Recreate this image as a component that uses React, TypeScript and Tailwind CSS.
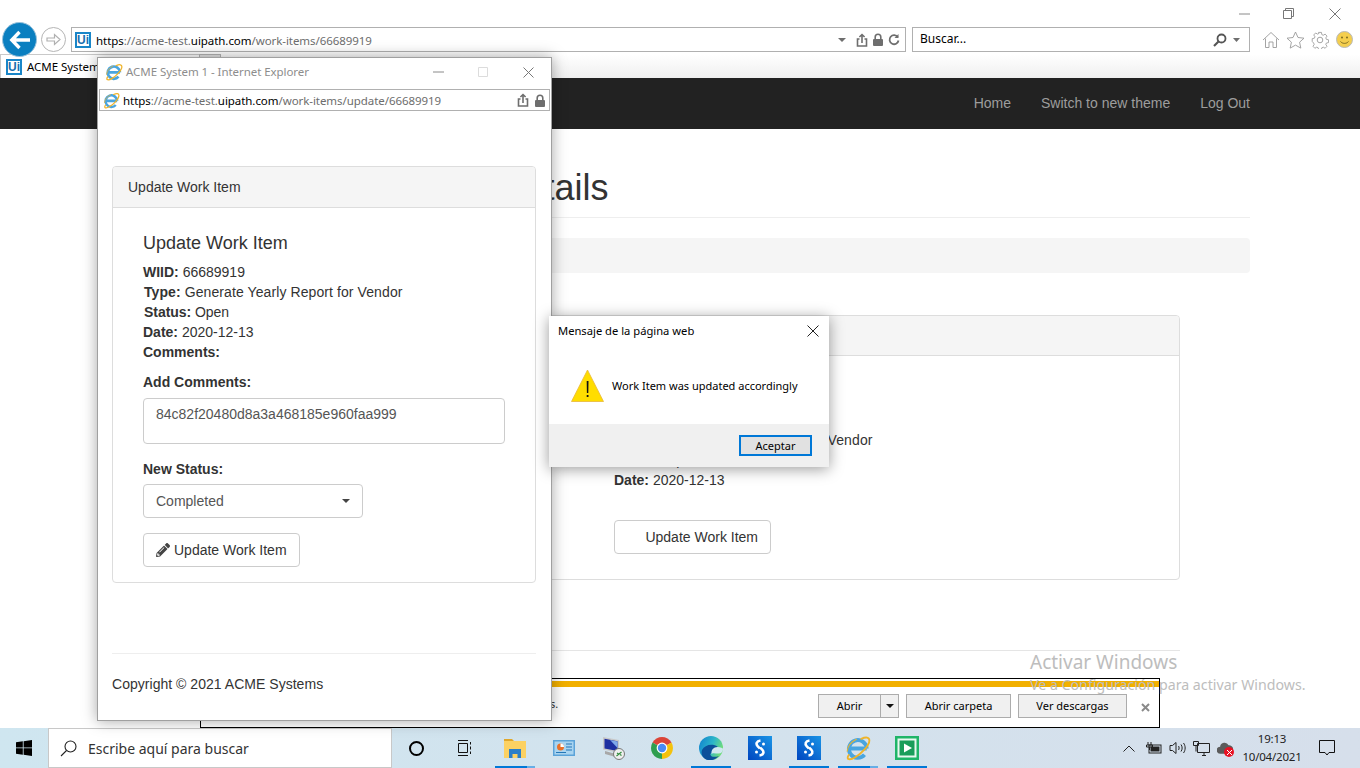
import React from "react";
import { FaPencilAlt } from "react-icons/fa";

const UI = "font-['Noto_Sans','Open_Sans',sans-serif]";
const WEB = "font-['Liberation_Sans',Arial,sans-serif]";

function UiLogo() {
  return (
    <span className={`${WEB} flex h-[16px] w-[16px] items-center justify-center border-2 border-[#1a86c8] bg-white text-[12px] font-bold leading-none text-[#1a6fb0]`}>
      Ui
    </span>
  );
}

function IeIcon({ size = 18 }: { size?: number }) {
  return (
    <svg width={size} height={size} viewBox="0 0 24 24" fill="none">
      <path d="M4.500 12.500h15.500M20 12.500A8.200 8.200 0 1 0 18 18.300" stroke="#4aa5df" strokeWidth="3.600" />
      <path d="M3.500 18.500c-3 4.500 1 5 6 2 5-3 13-10.500 13-15.500 0-3-3-3.500-7.500-1.500" stroke="#f0b429" strokeWidth="1.700" strokeLinecap="round" />
      <path d="M2 15C2.500 10 6.500 6 10.500 4" stroke="#f0b429" strokeWidth="1" strokeLinecap="round" />
    </svg>
  );
}

function ShareIcon() {
  return (
    <svg width="12" height="14" viewBox="0 0 12 14" fill="none" stroke="#6e6e6e" strokeWidth="1.600">
      <path d="M3.500 6H1.500v7h9V6H8.500" />
      <path d="M6 10V1.500M3.400 4 6 1.500 8.600 4" />
    </svg>
  );
}

function LockIcon() {
  return (
    <svg width="12" height="13" viewBox="0 0 12 13">
      <path d="M3.200 6V4a2.800 2.800 0 0 1 5.600 0v2" fill="none" stroke="#6e6e6e" strokeWidth="1.600" />
      <rect x="1" y="6" width="10" height="7" rx="1" fill="#6e6e6e" />
    </svg>
  );
}

function Url({ path }: { path: string }) {
  return (
    <span className={`${UI} text-[11.500px] tracking-[-0.06px] text-[#6d6d6d]`}>
      <span className="text-black">https</span>://acme-test.<span className="text-black">uipath.com</span>
      {path}
    </span>
  );
}

function ChromeTop() {
  return (
    <div className="relative h-[78px] bg-gradient-to-b from-white from-[70%] to-[#efefef]">
      <div className="flex h-[27px] items-center justify-end">
        <svg width="11" height="2" className="mr-[33px]"><path d="M0 1h11" stroke="#8a8a8a" /></svg>
        <svg width="11" height="11" className="mr-[35px]" fill="none" stroke="#777">
          <path d="M.5 2.500h8v8h-8zM2.500 2.500v-2h8v8h-2" />
        </svg>
        <svg width="12" height="12" className="mr-[19px]" stroke="#777"><path d="M.5.5l11 11M11.500.5l-11 11" /></svg>
      </div>
      <div className="flex h-[25px] items-center">
        <div className="z-10 ml-[2px] flex h-[35px] w-[35px] items-center justify-center rounded-full border border-[#9ac3dc] bg-[#0a7fc0]">
          <svg width="22" height="20" viewBox="0 0 22 20" fill="none" stroke="white" strokeWidth="3.400">
            <path d="M21 10H3M10.500 2 2.800 10l7.700 8" />
          </svg>
        </div>
        <div className="ml-[4px] flex h-[25px] w-[25px] items-center justify-center rounded-full border border-[#b5b5b5] bg-white">
          <svg width="15" height="13" viewBox="0 0 15 13" fill="none" stroke="#b0b0b0" strokeWidth="1.200">
            <path d="M1 5h7.500V1.500L14 6.500l-5.500 5V8H1z" />
          </svg>
        </div>
        <div className="ml-[5px] flex h-[25px] w-[835px] items-center border-[1.500px] border-[#b0b0b0] pl-[3px]">
          <UiLogo />
          <span className="mb-[2px] ml-[5px]"><Url path="/work-items/66689919" /></span>
          <div className="ml-auto mr-[5px] flex items-center gap-[4px]">
            <svg width="8" height="4" className="mr-[6px]"><path d="M0 0h8L4 4z" fill="#6e6e6e" /></svg>
            <ShareIcon />
            <LockIcon />
            <svg width="12" height="12" viewBox="0 0 12 12" fill="none" stroke="#6e6e6e" strokeWidth="1.800">
              <path d="M9.800 3.200A4.500 4.500 0 1 0 10.500 6.500" />
              <path d="M10.500 0v4h-4z" fill="#6e6e6e" stroke="none" />
            </svg>
          </div>
        </div>
        <div className="ml-[6px] flex h-[25px] w-[338px] items-center border-[1.500px] border-[#b0b0b0] pl-[7px]">
          <span className={`${UI} mb-[2px] text-[12px] text-black`}>Buscar...</span>
          <svg width="14" height="14" viewBox="0 0 14 14" fill="none" stroke="#555" strokeWidth="1.800" className="ml-auto">
            <circle cx="8.500" cy="5.500" r="4" />
            <path d="M5.500 8.500 1 13" strokeWidth="2.200" />
          </svg>
          <svg width="7" height="4" className="ml-[6px] mr-[9px]"><path d="M0 0h7L3.500 4z" fill="#6e6e6e" /></svg>
        </div>
        <div className="ml-[12px] flex items-center gap-[6px]">
          <svg width="18" height="18" viewBox="0 0 18 18" fill="none" stroke="#9a9a9a" strokeWidth="0.900">
            <path d="M1 9 9 1.500 17 9M3.500 7.500V16.500H7V11h4v5.500h3.500V7.500" />
          </svg>
          <svg width="19" height="18" viewBox="0 0 19 18" fill="none" stroke="#9a9a9a" strokeWidth="0.900">
            <path d="M9.500 1l2.500 5.500 6 .7-4.400 4 1.200 5.900-5.300-3-5.300 3 1.200-5.900L1 7.200l6-.7z" />
          </svg>
          <svg width="18" height="18" viewBox="0 0 18 18" fill="none" stroke="#9a9a9a" strokeWidth="0.900">
            <circle cx="9" cy="9" r="2.800" />
            <path d="M7.500 1h3l.4 2.300 1.500.7 2-1.200 2 2.100-1.300 1.900.6 1.500 2.300.5v2.900l-2.300.5-.6 1.500 1.300 1.900-2 2.100-2-1.200-1.500.7-.4 2.300h-3l-.4-2.300-1.500-.7-2 1.200-2-2.100 1.300-1.900-.6-1.500L.8 10.500V7.600l2.300-.5.600-1.500L2.400 3.700l2-2.100 2 1.200 1.500-.7z" transform="translate(.45 .45) scale(.95)" />
          </svg>
          <svg width="17" height="17" viewBox="0 0 17 17" className="ml-[1px]">
            <circle cx="8.500" cy="8.500" r="8" fill="#f4ce4d" stroke="#b9b9b9" />
            <circle cx="6" cy="6.500" r="1" fill="#7b6a20" />
            <circle cx="11" cy="6.500" r="1" fill="#7b6a20" />
            <path d="M4.500 10.500c2 2.500 6 2.500 8 0" fill="none" stroke="#7b6a20" />
          </svg>
        </div>
      </div>
      <div className="mt-[2px] flex h-[24px] items-end">
        <div className="flex h-[24px] w-[199px] items-center border-l border-t border-[#c9c9c9] bg-white pl-[5px]">
          <UiLogo />
          <span className={`${UI} ml-[5px] text-[11.500px] tracking-[-0.06px] text-black`}>ACME System</span>
        </div>
        <div className="h-[24px] w-[22px] border-x border-t border-[#b5b5b5] bg-[#e4e4e4]" />
      </div>
    </div>
  );
}

function Background() {
  return (
    <div className={`${WEB} flex-1 bg-white text-[14px] text-[#333]`}>
      <div className="ml-[110px] w-[1140px]">
        <h1 className="ml-[215px] pt-[39px] text-[36px] font-normal leading-[40px]">Work Item Details</h1>
        <div className="mt-[9px] border-t border-[#eee]" />
        <div className="mt-[20px] h-[35px] rounded-[4px] bg-[#f5f5f5]" />
        <div className="ml-[70px] mt-[42px] h-[265px] w-[1000px] rounded-[4px] border border-[#ddd]">
          <div className="h-[40px] rounded-t-[3px] border-b border-[#ddd] bg-[#f5f5f5]" />
          <div className="pl-[433px] pt-[54px] leading-[20px]">
            <div><b>WIID:</b> 66689919</div>
            <div className="tracking-[0.09px]"><b>Type:</b> Generate Yearly Report for Vendor</div>
            <div><b>Status:</b> Open</div>
            <div><b>Date:</b> 2020-12-13</div>
            <div className="mt-[30px] inline-flex h-[34px] w-[157px] items-center justify-end rounded-[4px] border border-[#ccc] pr-[12px]">
              Update Work Item
            </div>
          </div>
        </div>
        <div className="ml-[70px] mt-[70px] w-[1000px] border-t border-[#e5e5e5]" />
      </div>
    </div>
  );
}

function Popup() {
  return (
    <div className="absolute left-[97px] top-[57px] flex h-[664px] w-[455px] flex-col border border-[#a0a0a0] bg-white shadow-[0_0_14px_rgba(0,0,0,0.35)]">
      <div className="flex h-[28px] items-center pl-[7px]">
        <IeIcon size={18} />
        <span className={`${UI} mb-[1px] ml-[3px] text-[11.500px] tracking-[-0.06px] text-[#8d8d8d]`}>ACME System 1 - Internet Explorer</span>
        <svg width="11" height="2" className="ml-auto mr-[34px]"><path d="M0 1h11" stroke="#8a8a8a" /></svg>
        <svg width="10" height="10" className="mr-[35px]" fill="none" stroke="#dcdcdc"><path d="M.5.5h9v9h-9z" /></svg>
        <svg width="11" height="11" className="mr-[17px]" stroke="#777"><path d="M.5.5l10 10M10.500.5l-10 10" /></svg>
      </div>
      <div className="mx-[1px] mt-[3px] flex h-[22px] items-center border border-[#b0b0b0] pl-[3px]">
        <IeIcon size={17} />
        <span className="mb-[2px] ml-[3px]"><Url path="/work-items/update/66689919" /></span>
        <div className="ml-auto mr-[3px] flex items-center gap-[5px]">
          <ShareIcon />
          <LockIcon />
        </div>
      </div>
      <div className={`${WEB} pl-[14px] pr-[15px] text-[14px] text-[#333]`}>
        <div className="mt-[55px] h-[417px] rounded-[4px] border border-[#ddd]">
          <div className="flex h-[41px] items-center rounded-t-[3px] border-b border-[#ddd] bg-[#f5f5f5] pl-[15px]">Update Work Item</div>
          <div className="pl-[30px] pr-[30px]">
            <h3 className="mt-[25px] text-[18px] font-normal leading-[20px]">Update Work Item</h3>
            <div className="mt-[9px] leading-[20px]">
              <div><b>WIID:</b> 66689919</div>
              <div className="pl-[1px] tracking-[0.09px]"><b>Type:</b> Generate Yearly Report for Vendor</div>
              <div className="pl-[1px] tracking-[-0.05px]"><b>Status:</b> Open</div>
              <div><b>Date:</b> 2020-12-13</div>
              <div><b>Comments:</b></div>
            </div>
            <div className="mt-[10px] font-bold leading-[20px]">Add Comments:</div>
            <div className="mt-[6px] h-[46px] w-[362px] rounded-[4px] border border-[#ccc] px-[12px] pt-[5px] leading-[20px] text-[#555]">84c82f20480d8a3a468185e960faa999</div>
            <div className="mt-[15px] font-bold leading-[20px]">New Status:</div>
            <div className="mt-[5px] flex h-[34px] w-[220px] items-center justify-between rounded-[4px] border border-[#ccc] pl-[12px] pr-[12px] text-[#555]">
              Completed
              <svg width="8" height="4"><path d="M0 0h8L4 4z" fill="#444" /></svg>
            </div>
            <div className="mt-[15px] flex h-[34px] w-[157px] items-center rounded-[4px] border border-[#ccc] pl-[12px]">
              <FaPencilAlt className="mr-[4px] text-[14px] text-[#444]" />
              Update Work Item
            </div>
          </div>
        </div>
        <div className="mt-[70px] border-t border-[#eee]" />
        <div className="mt-[20px] leading-[20px] tracking-[0.03px]">Copyright © 2021 ACME Systems</div>
      </div>
    </div>
  );
}

function AlertBox() {
  return (
    <div className={`${UI} absolute left-[549px] top-[316px] flex h-[151px] w-[280px] flex-col bg-white text-black shadow-[0_2px_14px_rgba(0,0,0,0.4)]`}>
      <div className="flex h-[30px] items-center justify-between pl-[9px] pr-[10px] text-[11.200px]">
        Mensaje de la página web
        <svg width="12" height="12" stroke="#222"><path d="M.5.5l11 11M11.500.5l-11 11" /></svg>
      </div>
      <div className="flex h-[78px] items-center pl-[22px] text-[11px]">
        <svg width="33" height="33" viewBox="0 0 33 33">
          <path d="M16.500 1 32.500 32.500H.5z" fill="#ffdd00" stroke="#e8b838" strokeWidth=".8" />
          <path d="M15.700 12h1.800l-.2 12h-1.400zM15.700 26h1.800v2h-1.800z" fill="#111" />
        </svg>
        <span className="ml-[8px] mt-[3px]">Work Item was updated accordingly</span>
      </div>
      <div className="flex flex-1 items-center justify-end bg-[#f0f0f0] pr-[17px]">
        <div className="flex h-[21px] w-[73px] items-center justify-center border-2 border-[#0078d7] bg-[#e1e1e1] pt-[1px] text-[11px]">Aceptar</div>
      </div>
    </div>
  );
}

function DownloadBar() {
  return (
    <div className={`${UI} absolute left-[200px] top-[678px] h-[50px] w-[960px] border border-black bg-white text-[11px] text-black`}>
      <div className="mt-[2px] h-[6px] bg-[#f2b000]" />
      <div className="absolute left-[349px] top-[17px] text-[#333]">s.</div>
      <div className="absolute right-[32px] top-[15px] flex gap-[7px]">
        <div className="flex h-[24px] w-[81px] border border-[#acacac] bg-[#f0f0f0]">
          <div className="flex flex-1 items-center justify-center border-r border-[#acacac]">Abrir</div>
          <div className="flex w-[17px] items-center justify-center">
            <svg width="8" height="4"><path d="M0 0h8L4 4z" fill="#111" /></svg>
          </div>
        </div>
        <div className="flex h-[24px] w-[105px] items-center justify-center border border-[#acacac] bg-[#f0f0f0]">Abrir carpeta</div>
        <div className="flex h-[24px] w-[109px] items-center justify-center border border-[#acacac] bg-[#f0f0f0]">Ver descargas</div>
      </div>
      <svg width="9" height="9" className="absolute left-[940px] top-[24px]" stroke="#8a8a8a" strokeWidth="2"><path d="M1 1l7 7M8 1 1 8" /></svg>
    </div>
  );
}

function Slot({ children, w = 49, bar, stacked }: { children: React.ReactNode; w?: number; bar?: boolean; stacked?: boolean }) {
  return (
    <div className="relative flex h-full items-center justify-center" style={{ width: w }}>
      {children}
      {bar && (
        <div className="absolute bottom-0 left-[5px] flex h-[2px] w-[40px] bg-[#0078d7]">
          {stacked && <div className="ml-auto h-full w-[8px] bg-[#66aee6]" />}
        </div>
      )}
    </div>
  );
}

function SIcon() {
  return (
    <svg width="24" height="24" viewBox="0 0 24 24">
      <defs>
        <linearGradient id="sg" x1="0" y1="1" x2="1" y2="0">
          <stop offset="0" stopColor="#0046c0" />
          <stop offset="1" stopColor="#1a94e6" />
        </linearGradient>
      </defs>
      <rect width="24" height="24" fill="url(#sg)" />
      <path d="M12.500 4.500C8.500 5 7.500 8 9.800 10.300L11.800 12.300M11.500 19.500C15.500 19 16.500 16 14.200 13.700L12.200 11.700" fill="none" stroke="white" strokeWidth="2.600" />
      <circle cx="15.500" cy="8" r="1.500" fill="white" />
      <circle cx="8.500" cy="16" r="1.500" fill="white" />
    </svg>
  );
}

function Taskbar() {
  return (
    <div className="flex h-[40px] items-stretch bg-gradient-to-r from-[#cfe6f0] to-[#d6dfeb]">
      <div className="flex w-[48px] items-center justify-center">
        <svg width="16" height="16" viewBox="0 0 16 16" fill="#000">
          <path d="M0 2.300 6.800 1.300V7.500H0zM7.600 1.200 16 0V7.500H7.600zM0 8.300H6.800V14.700L0 13.700zM7.600 8.300H16V16L7.600 14.800z" />
        </svg>
      </div>
      <div className="flex w-[344px] items-center border border-[#c8c8c8] bg-white pl-[11px]">
        <svg width="17" height="17" viewBox="0 0 17 17" fill="none" stroke="#222" strokeWidth="1.100">
          <circle cx="10.500" cy="6.500" r="5.500" />
          <path d="M6.500 10.500 1 16" />
        </svg>
        <span className={`${UI} ml-[11px] text-[14px] text-[#333]`}>Escribe aquí para buscar</span>
      </div>
      <Slot w={48}>
        <div className="h-[15px] w-[15px] rounded-full border-[2.500px] border-black" />
      </Slot>
      <Slot w={50}>
        <svg width="16" height="16" viewBox="0 0 16 16" fill="none" stroke="#111">
          <path d="M1 .5h10M1 15.500h10M1.500 3.500h9v9h-9zM13.500 2v2.500M13.500 6.500v3M13.500 11.500v2.500" />
        </svg>
      </Slot>
      <Slot bar stacked>
        <svg width="22" height="20" viewBox="0 0 22 20">
          <path d="M0 1h8l2 2H0z" fill="#e0a72b" />
          <path d="M0 3h22v17H0z" fill="#fcd162" />
          <path d="M5 11h12v9h-3.500v-4h-5v4H5z" fill="#2b7fc9" />
        </svg>
      </Slot>
      <Slot>
        <svg width="22" height="16" viewBox="0 0 22 16">
          <rect width="22" height="16" fill="#5ba3d9" />
          <rect x="1.500" y="1.500" width="19" height="13" fill="#a9d4f0" />
          <circle cx="7.500" cy="7" r="3.500" fill="#e8702a" />
          <path d="M7.500 3.500V7H11A3.500 3.500 0 0 0 7.500 3.500z" fill="#fff" />
          <path d="M13 4h6M13 7h6M13 10h6M3 12.500h10" stroke="#2477b8" />
        </svg>
      </Slot>
      <Slot>
        <svg width="24" height="24" viewBox="0 0 24 24">
          <path d="M2 1 18 4v13L2 13.500z" fill="#c8c8c8" />
          <path d="M3.500 2.800 16.500 5.300V15L3.500 12.500z" fill="#1e2fa0" />
          <path d="M9 4 16.500 5.500V12z" fill="#7fa8ea" />
          <path d="M4 15l9 2.500v3L4 18z" fill="#a8a8a8" />
          <circle cx="18" cy="18" r="5.500" fill="#efefef" stroke="#777" />
          <path d="M15.500 20l5-4M16 17l1.500 1M19 18.500l1.500 1" stroke="#2f8a3a" strokeWidth="1.200" />
        </svg>
      </Slot>
      <Slot>
        <svg width="24" height="24" viewBox="0 0 24 24">
          <path d="M12 12 2.500 6.500A11 11 0 0 1 21.500 6.500z" fill="#db4437" />
          <path d="M12 12 21.500 6.500A11 11 0 0 1 12 23z" fill="#f4c20d" />
          <path d="M12 12V23A11 11 0 0 1 2.500 6.500z" fill="#2f9e4f" />
          <circle cx="12" cy="12" r="5.400" fill="#fff" />
          <circle cx="12" cy="12" r="4.200" fill="#4a8af4" />
        </svg>
      </Slot>
      <Slot bar>
        <svg width="24" height="24" viewBox="0 0 24 24">
          <defs>
            <linearGradient id="eg" x1="0" y1="0" x2="1" y2="0.400">
              <stop offset="0" stopColor="#0f7fd0" />
              <stop offset="0.600" stopColor="#2cb6c9" />
              <stop offset="1" stopColor="#6fdc7c" />
            </linearGradient>
          </defs>
          <circle cx="12" cy="12" r="12" fill="url(#eg)" />
          <path d="M9 24C4 23 1.500 18 3 14c2-4 7-6 12-5 4 1 6 4 5 6-1 1.500-3 2-6 2-2 0-3 .5-2.500 2 .7 2 4 2.500 8.500 1-3 3-7 5-11.500 4z" fill="#0b4f9a" />
          <path d="M24 13c0 2.500-1.500 4.500-4.500 4.500-3 0-6-1-7 .5-.5-4 2-7 6-7 3 0 5.500 1 5.500 2z" fill="#d0e8f0" />
        </svg>
      </Slot>
      <Slot><SIcon /></Slot>
      <Slot bar><SIcon /></Slot>
      <Slot bar stacked><IeIcon size={26} /></Slot>
      <Slot bar>
        <svg width="24" height="24" viewBox="0 0 24 24">
          <rect width="24" height="24" fill="#1fb568" />
          <rect x="2.500" y="2.500" width="19" height="19" fill="#e8f8ef" />
          <rect x="4.500" y="4.500" width="15" height="15" fill="#1a9d5a" />
          <path d="M9 7.500 17 12l-8 4.500z" fill="#fff" />
        </svg>
      </Slot>
      <div className="ml-auto flex items-center pr-[13px]">
        <Slot w={24}>
          <svg width="12" height="7" fill="none" stroke="#222"><path d="M.5 6.500 6 1l5.500 5.500" /></svg>
        </Slot>
        <Slot w={24}>
          <svg width="17" height="12" viewBox="0 0 17 12">
            <path d="M3 0v3M6 0v3M1.500 3h6v2H1.500zM4.500 5v3" stroke="#222" fill="none" />
            <rect x="4" y="3" width="12" height="8" fill="none" stroke="#222" />
            <rect x="5.500" y="4.500" width="9" height="5" fill="#222" />
          </svg>
        </Slot>
        <Slot w={24}>
          <svg width="17" height="14" viewBox="0 0 17 14" fill="none" stroke="#222">
            <path d="M1 4.500h2.500L7 1.500v11l-3.500-3H1zM9.500 5c.8 1 .8 3 0 4M12 3.500c1.500 2 1.500 5 0 7M14.500 2c2.200 3 2.200 7 0 10" />
          </svg>
        </Slot>
        <Slot w={24}>
          <svg width="17" height="15" viewBox="0 0 17 15" fill="none" stroke="#222">
            <path d="M4.500 2.500h12v9h-12zM9 14.500h4M11 11.500v3M.5.500h5v4h-5zM3 4.500v6" />
          </svg>
        </Slot>
        <Slot w={24}>
          <div className="relative">
            <svg width="16" height="12" viewBox="0 0 18 13"><path d="M4 13a4 4 0 0 1-.5-8A5 5 0 0 1 13 3.500 4.500 4.500 0 0 1 14 13z" fill="#5b5b5b" /></svg>
            <div className="absolute left-[7px] top-[5px] flex h-[10px] w-[10px] items-center justify-center rounded-full bg-[#e81123]">
              <svg width="5" height="5" stroke="#fff"><path d="M0 0l5 5M5 0 0 5" /></svg>
            </div>
          </div>
        </Slot>
        <div className={`${UI} flex w-[70px] flex-col items-center text-[11.500px] leading-[18px] tracking-[-0.2px] text-[#222]`}>
          <span>19:13</span>
          <span className="whitespace-nowrap">10/04/2021</span>
        </div>
        <Slot w={40}>
          <svg width="16" height="16" viewBox="0 0 16 16" fill="none" stroke="#111">
            <path d="M.5.500h15v12H10L8 15l-2-2.500H.5z" />
          </svg>
        </Slot>
      </div>
    </div>
  );
}

export default function App() {
  return (
    <div className="relative flex h-[768px] w-[1360px] flex-col overflow-hidden bg-white">
      <ChromeTop />
      <div className={`${WEB} flex h-[51px] items-center justify-end gap-[30px] bg-[#222] pr-[110px] text-[14px] text-[#9d9d9d]`}>
        <span>Home</span>
        <span>Switch to new theme</span>
        <span>Log Out</span>
      </div>
      <Background />
      <Taskbar />
      <DownloadBar />
      <div className={`${UI} absolute left-[1030px] top-[650px] text-[#bdbdbd]`}>
        <div className="text-[19px] leading-[25px]">Activar Windows</div>
        <div className="whitespace-nowrap text-[14.200px] leading-[20px]">Ve a Configuración para activar Windows.</div>
      </div>
      <Popup />
      <AlertBox />
    </div>
  );
}
